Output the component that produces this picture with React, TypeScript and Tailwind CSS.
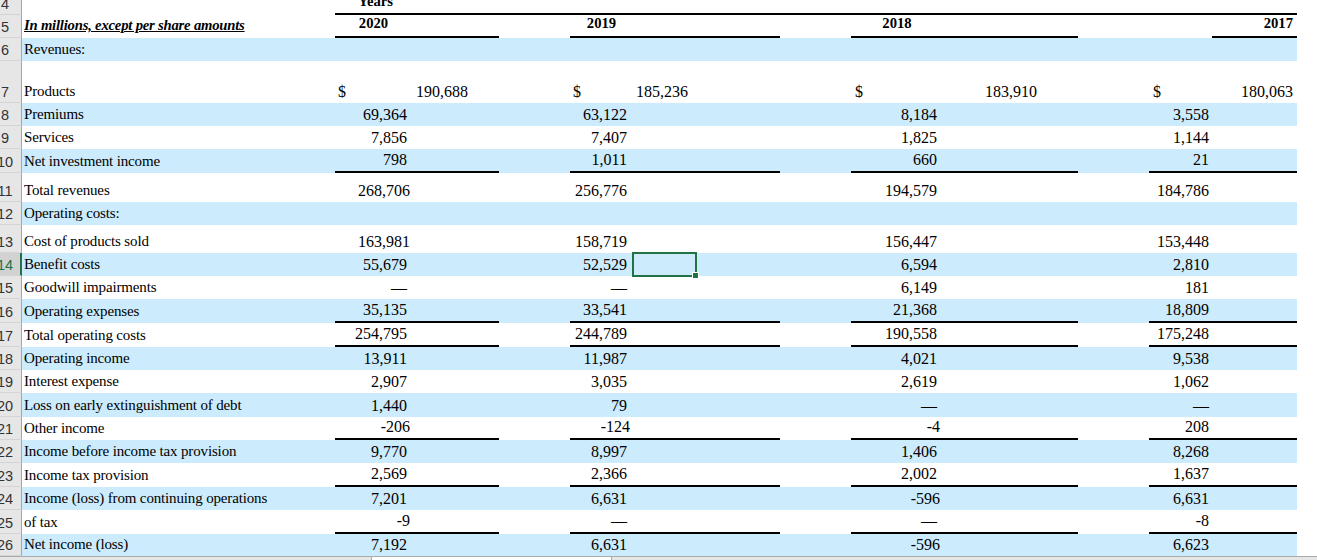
// Feuille de calcul : compte de resultat 2017-2020 (vue Excel figee).
const SERIF = "font-['Liberation_Serif','Times_New_Roman',serif]";

type Row = {
  n: number;
  label: string;
  h: string;
  blue?: boolean;
  line?: boolean;
  dollar?: boolean;
  selected?: boolean;
  vals?: string[];
  shift?: boolean[];
};

// Largeur du bloc, marges a droite des valeurs (normale, decalee, ligne en $), retrait du $.
const GROUPS = [
  { w: 'w-[164px]', pr: 'pr-[92px]', prShift: 'pr-[89px]', prDollar: 'pr-[31px]', pl: 'pl-[3px]' },
  { w: 'w-[210px]', pr: 'pr-[153px]', prShift: 'pr-[150px]', prDollar: 'pr-[92px]', pl: 'pl-[3px]' },
  { w: 'w-[227px]', pr: 'pr-[141px]', prShift: 'pr-[138px]', prDollar: 'pr-[41px]', pl: 'pl-[4px]' },
  { w: 'w-[148px]', pr: 'pr-[88px]', prShift: 'pr-[88px]', prDollar: 'pr-[4px]', pl: 'pl-[4px]' },
];

const ROWS: Row[] = [
  { n: 6, label: 'Revenues:', h: 'h-[23px]', blue: true },
  { n: 7, label: 'Products', h: 'h-[42px]', dollar: true, vals: ['190,688', '185,236', '183,910', '180,063'] },
  { n: 8, label: 'Premiums', h: 'h-[23px]', blue: true, vals: ['69,364', '63,122', '8,184', '3,558'] },
  { n: 9, label: 'Services', h: 'h-[23px]', vals: ['7,856', '7,407', '1,825', '1,144'] },
  { n: 10, label: 'Net investment income', h: 'h-[24px]', blue: true, line: true, vals: ['798', '1,011', '660', '21'] },
  { n: 11, label: 'Total revenues', h: 'h-[29px]', vals: ['268,706', '256,776', '194,579', '184,786'], shift: [true, false, false, false] },
  { n: 12, label: 'Operating costs:', h: 'h-[23px]', blue: true },
  { n: 13, label: 'Cost of products sold', h: 'h-[28px]', vals: ['163,981', '158,719', '156,447', '153,448'], shift: [true, false, false, false] },
  { n: 14, label: 'Benefit costs', h: 'h-[23px]', blue: true, selected: true, vals: ['55,679', '52,529', '6,594', '2,810'] },
  { n: 15, label: 'Goodwill impairments', h: 'h-[23px]', vals: ['—', '—', '6,149', '181'] },
  { n: 16, label: 'Operating expenses', h: 'h-[24px]', blue: true, line: true, vals: ['35,135', '33,541', '21,368', '18,809'] },
  { n: 17, label: 'Total operating costs', h: 'h-[24px]', line: true, vals: ['254,795', '244,789', '190,558', '175,248'] },
  { n: 18, label: 'Operating income', h: 'h-[23px]', blue: true, vals: ['13,911', '11,987', '4,021', '9,538'] },
  { n: 19, label: 'Interest expense', h: 'h-[23px]', vals: ['2,907', '3,035', '2,619', '1,062'] },
  { n: 20, label: 'Loss on early extinguishment of debt', h: 'h-[24px]', blue: true, vals: ['1,440', '79', '—', '—'] },
  { n: 21, label: 'Other income', h: 'h-[23px]', line: true, vals: ['-206', '-124', '-4', '208'], shift: [true, true, true, false] },
  { n: 22, label: 'Income before income tax provision', h: 'h-[23px]', blue: true, vals: ['9,770', '8,997', '1,406', '8,268'] },
  { n: 23, label: 'Income tax provision', h: 'h-[24px]', line: true, vals: ['2,569', '2,366', '2,002', '1,637'] },
  { n: 24, label: 'Income (loss) from continuing operations', h: 'h-[23px]', blue: true, vals: ['7,201', '6,631', '-596', '6,631'], shift: [false, false, true, false] },
  { n: 25, label: 'of tax', h: 'h-[24px]', line: true, vals: ['-9', '—', '—', '-8'], shift: [true, false, false, false] },
  { n: 26, label: 'Net income (loss)', h: 'h-[22px]', blue: true, vals: ['7,192', '6,631', '-596', '6,623'], shift: [false, false, true, false] },
];

const RowHeader = ({ n, selected }: { n: number; selected?: boolean }) => (
  <div
    className={`flex w-[22px] shrink-0 items-end overflow-hidden border-b border-r border-b-[#d4d4d4] pb-[3px] font-['Liberation_Sans',Arial,sans-serif] text-[14.5px] leading-none ${selected ? 'border-r-2 border-r-[#217346] bg-[#d2d2d2] text-[#217346]' : 'border-r-[#a6a6a6] bg-[#e6e6e6] text-[#333]'}`}
  >
    <span className="-ml-[12px] block w-[34px] shrink-0 text-center">{n}</span>
  </div>
);

const Gap = () => <div className="w-[71px] shrink-0" />;

const ValueCell = ({ row, index }: { row: Row; index: number }) => {
  const group = GROUPS[index];
  const value = row.vals?.[index];
  const pr = row.dollar ? group.prDollar : row.shift?.[index] ? group.prShift : group.pr;

  return (
    <div
      className={`relative flex shrink-0 items-end pb-[3px] text-[16px] leading-none ${group.w} ${row.line ? 'border-b-2 border-black' : ''}`}
    >
      {row.dollar && <span className={group.pl}>$</span>}
      {value && <span className={`ml-auto ${pr}`}>{value}</span>}
      {row.selected && index === 1 && (
        <div className="absolute left-[62px] top-[-1px] h-[25px] w-[65px] border-2 border-[#217346]">
          <div className="absolute -bottom-[4px] -right-[4px] h-[7px] w-[7px] border border-white bg-[#217346]" />
        </div>
      )}
    </div>
  );
};

const DataRow = ({ row }: { row: Row }) => (
  <div className={`flex ${row.h}`}>
    <RowHeader n={row.n} selected={row.selected} />
    <div className={`flex w-[1275px] shrink-0 ${row.blue ? 'bg-[#ccebfc]' : 'bg-white'}`}>
      <div className="flex w-[313px] shrink-0 items-end pb-[4px] pl-[2px] text-[15px] leading-none tracking-[-0.15px]">
        {row.label}
      </div>
      <ValueCell row={row} index={0} />
      <Gap />
      <ValueCell row={row} index={1} />
      <Gap />
      <ValueCell row={row} index={2} />
      <Gap />
      <ValueCell row={row} index={3} />
    </div>
  </div>
);

export default function App() {
  return (
    <div className={`h-[560px] w-[1317px] overflow-hidden bg-white text-black ${SERIF}`}>
      <div className="-mt-[10px]">
        {/* Ligne 4 : titre "Years" et filet continu */}
        <div className="flex h-[25px]">
          <RowHeader n={4} />
          <div className="w-[313px] shrink-0" />
          <div className="flex w-[962px] shrink-0 items-end border-b-2 border-black pb-[4px] text-[14.67px] font-bold leading-none">
            <span className="w-[81px] text-center">Years</span>
          </div>
        </div>

        {/* Ligne 5 : en-tetes d'annees */}
        <div className="flex h-[23px]">
          <RowHeader n={5} />
          <div className="flex w-[313px] shrink-0 items-end pb-[5px] pl-[2px] text-[14.67px] font-bold italic leading-none tracking-[-0.2px] underline">
            In millions, except per share amounts
          </div>
          <div className="flex w-[164px] shrink-0 items-end border-b-2 border-black pb-[5px] text-[14.67px] font-bold leading-none">
            <span className="w-[77px] text-center">2020</span>
          </div>
          <Gap />
          <div className="flex w-[210px] shrink-0 items-end border-b-2 border-black pb-[5px] text-[14.67px] font-bold leading-none">
            <span className="w-[63px] text-center">2019</span>
          </div>
          <Gap />
          <div className="flex w-[227px] shrink-0 items-end border-b-2 border-black pb-[5px] text-[14.67px] font-bold leading-none">
            <span className="w-[92px] text-center">2018</span>
          </div>
          <Gap />
          <div className="flex w-[148px] shrink-0 justify-end">
            <div className="flex w-[85px] items-end justify-end border-b-2 border-black pb-[5px] pr-[4px] text-[14.67px] font-bold leading-none">
              2017
            </div>
          </div>
        </div>

        {ROWS.map((row) => (
          <DataRow key={row.n} row={row} />
        ))}

        {/* Barre de defilement horizontale */}
        <div className="flex h-[20px] border-t border-[#ababab] bg-[#e6e6e6]">
          <div className="w-[371px] shrink-0" />
          <div className="w-[241px] shrink-0 border-x border-[#ababab] bg-white" />
        </div>
      </div>
    </div>
  );
}
